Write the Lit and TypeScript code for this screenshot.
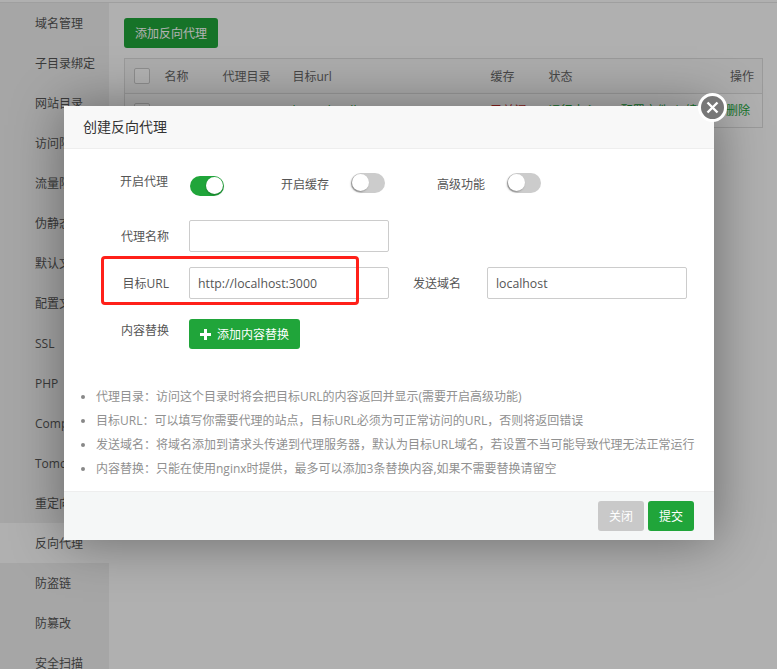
import { LitElement, html, css } from "lit";
import { customElement } from "lit/decorators.js";

const MENU = ["域名管理","子目录绑定","网站目录","访问限制","流量限制","伪静态","默认文档","配置文件","SSL","PHP","Composer","Tomcat","重定向","反向代理","防盗链","防篡改","安全扫描"];
const NOTES = [
  "代理目录：访问这个目录时将会把目标URL的内容返回并显示(需要开启高级功能)",
  "目标URL：可以填写你需要代理的站点，目标URL必须为可正常访问的URL，否则将返回错误",
  "发送域名：将域名添加到请求头传递到代理服务器，默认为目标URL域名，若设置不当可能导致代理无法正常运行",
  "内容替换：只能在使用nginx时提供，最多可以添加3条替换内容,如果不需要替换请留空",
];

@customElement("app-root")
export class AppRoot extends LitElement {
  static styles = css`
    :host { display: block; position: relative; width: 777px; height: 669px; overflow: hidden; background: #fff;
      font-family: "Open Sans", "Noto Sans CJK SC", sans-serif; font-size: 12px; color: #666; }
    * { box-sizing: border-box; }
    .top { height: 3px; background: #fcfcfc; border-bottom: 1px solid #e4e4e4; }
    .page { display: flex; height: 666px; }
    .side { width: 109px; flex: none; background: #eeeeee; }
    .side div { height: 40px; line-height: 42px; padding-left: 35px; color: #555; white-space: nowrap; }
    .side div.on { background: #fcfcfc; }
    .main { flex: 1; padding: 15px 14px 0 15px; background: #fcfcfc; }
    .add { display: block; width: 94px; height: 30px; border: 0; border-radius: 3px; background: #20a53a; color: #fff;
      font: inherit; padding: 0; margin-bottom: 10px; }
    table { width: 639px; border-collapse: collapse; table-layout: fixed; border: 1px solid #ddd; }
    th, td { text-align: left; font-weight: 400; padding: 0 0 0 10px; white-space: pre; overflow: hidden; }
    th { height: 35px; background: #f6f6f6; border-bottom: 1px solid #ddd; color: #666; }
    td { height: 34px; line-height: 32px; }
    th.right { text-align: right; padding-right: 8px; }
    td.right { text-align: right; padding-right: 12px; word-spacing: -0.6px; }
    .cb { display: block; width: 16px; height: 16px; border: 1px solid #ccc; border-radius: 2px; background: #fff; margin-left: -1px; }
    .g { color: #20a53a; } .r { color: #c9302c; }

    .shade { position: absolute; inset: 0; background: rgba(0,0,0,.3); }
    .modal { position: absolute; left: 64px; top: 106px; width: 650px; height: 434px; background: #fff;
      box-shadow: 1px 1px 50px rgba(0,0,0,.4); display: flex; flex-direction: column; }
    .head { height: 43px; flex: none; line-height: 42px; padding-left: 19px; font-size: 14px; color: #333;
      background: #f8f8f8; border-bottom: 1px solid #eee; }
    .close { position: absolute; right: -13px; top: -13px; width: 29px; height: 29px; border-radius: 50%;
      border: 3px solid #fff; background: #777; display: flex; align-items: center; justify-content: center; }
    .body { flex: 1; padding: 23px 0 0 0; }
    .switches { display: grid; grid-template-columns: 161px 156px auto; padding-left: 56px; height: 48px; align-items: start; }
    .sw { display: flex; align-items: center; }
    .sw span { width: 48px; white-space: nowrap; color: #555; }
    .sw span.up { margin-bottom: 10px; }
    .sw span.dn { margin-top: 3px; }
    .tg { position: relative; width: 34px; height: 20px; border-radius: 10px; background: #ccc; margin-left: 22px; }
    .tg.on { background: #20a53a; }
    .tg i { position: absolute; top: 1px; left: 1px; width: 17px; height: 17px; border-radius: 50%; background: #fff;
      box-shadow: -1px 1px 2px rgba(0,0,0,.35); }
    .tg.on i { left: 16px; box-shadow: 0 1px 2px rgba(0,0,0,.3); }
    .row { display: flex; align-items: center; height: 32px; margin-bottom: 15px; }
    .lab { width: 105px; text-align: right; color: #555; flex: none; white-space: nowrap; }
    .inp { width: 200px; height: 32px; margin-left: 20px; flex: none; border: 1px solid #ccc; border-radius: 2px;
      padding-left: 8px; line-height: 31px; font-size: 12.3px; color: #555; }
    .lab2 { width: 49px; margin-left: 24px; color: #555; white-space: nowrap; flex: none; }
    .inp.b { margin-left: 25px; }
    .row.c { height: 30px; margin-top: 20px; margin-bottom: 0; align-items: flex-start; }
    .row.c .lab { padding-top: 2px; }
    .plus { display: flex; align-items: center; justify-content: center; gap: 6px; width: 111px; height: 30px; margin-left: 20px;
      border: 0; padding: 0; border-radius: 3px; background: #20a53a; color: #fff; font: inherit; font-size: 12px; }
    ul { margin: 36px 0 0; padding: 0 0 0 32px; color: #909090; }
    li { line-height: 24px; white-space: nowrap; }
    li::marker { color: #888; }
    .foot { height: 49px; flex: none; display: flex; justify-content: flex-end; align-items: flex-start; gap: 4px;
      padding: 9px 20px 0 0; background: #f5f7f7; border-top: 1px solid #eee; }
    .foot button { width: 46px; height: 30px; border: 0; padding: 0; border-radius: 3px; font: inherit; color: #fff; background: #20a53a; }
    .foot button.off { background: #c9c9c9; }
    .mark { position: absolute; left: 101px; top: 256px; width: 258px; height: 49px; border: 3px solid #ff2019; border-radius: 4px; }
  `;

  render() {
    return html`
      <div class="top"></div>
      <div class="page">
        <nav class="side">
          ${MENU.map((m) => html`<div class=${m === "反向代理" ? "on" : ""}>${m}</div>`)}
        </nav>
        <main class="main">
          <button class="add">添加反向代理</button>
          <table>
            <colgroup><col style="width:30px"/><col style="width:58px"/><col style="width:70px"/><col style="width:198px"/><col style="width:58px"/><col style="width:72px"/><col/></colgroup>
            <tr><th><span class="cb"></span></th><th>名称</th><th>代理目录</th><th>目标url</th><th>缓存</th><th>状态</th><th class="right">操作</th></tr>
            <tr><td><span class="cb"></span></td><td>test</td><td>/</td><td class="g">http://localhost</td><td class="r">已关闭</td><td class="g">运行中 ▶</td><td class="right g">配置文件  |  编辑  |  删除</td></tr>
          </table>
        </main>
      </div>
      <div class="shade"></div>
      <section class="modal">
        <header class="head">创建反向代理</header>
        <div class="close">
          <svg width="15" height="15" viewBox="0 0 15 15"><path d="M2.5 2.5 12.5 12.5M12.5 2.5 2.5 12.5" stroke="#fff" stroke-width="2.4" fill="none"/></svg>
        </div>
        <div class="body">
          <div class="switches">
            <div class="sw"><span class="up">开启代理</span><div class="tg on"><i></i></div></div>
            <div class="sw"><span class="dn">开启缓存</span><div class="tg"><i></i></div></div>
            <div class="sw"><span class="dn">高级功能</span><div class="tg"><i></i></div></div>
          </div>
          <div class="row"><div class="lab">代理名称</div><div class="inp"></div></div>
          <div class="row"><div class="lab">目标URL</div><div class="inp">http://localhost:3000</div><div class="lab2">发送域名</div><div class="inp b">localhost</div></div>
          <div class="row c"><div class="lab">内容替换</div>
            <button class="plus"><svg width="11" height="11" viewBox="0 0 11 11"><path d="M4 0h3v4h4v3H7v4H4V7H0V4h4z" fill="#fff"/></svg>添加内容替换</button>
          </div>
          <ul>${NOTES.map((n) => html`<li>${n}</li>`)}</ul>
        </div>
        <footer class="foot"><button class="off">关闭</button><button>提交</button></footer>
      </section>
      <div class="mark"></div>
    `;
  }
}
